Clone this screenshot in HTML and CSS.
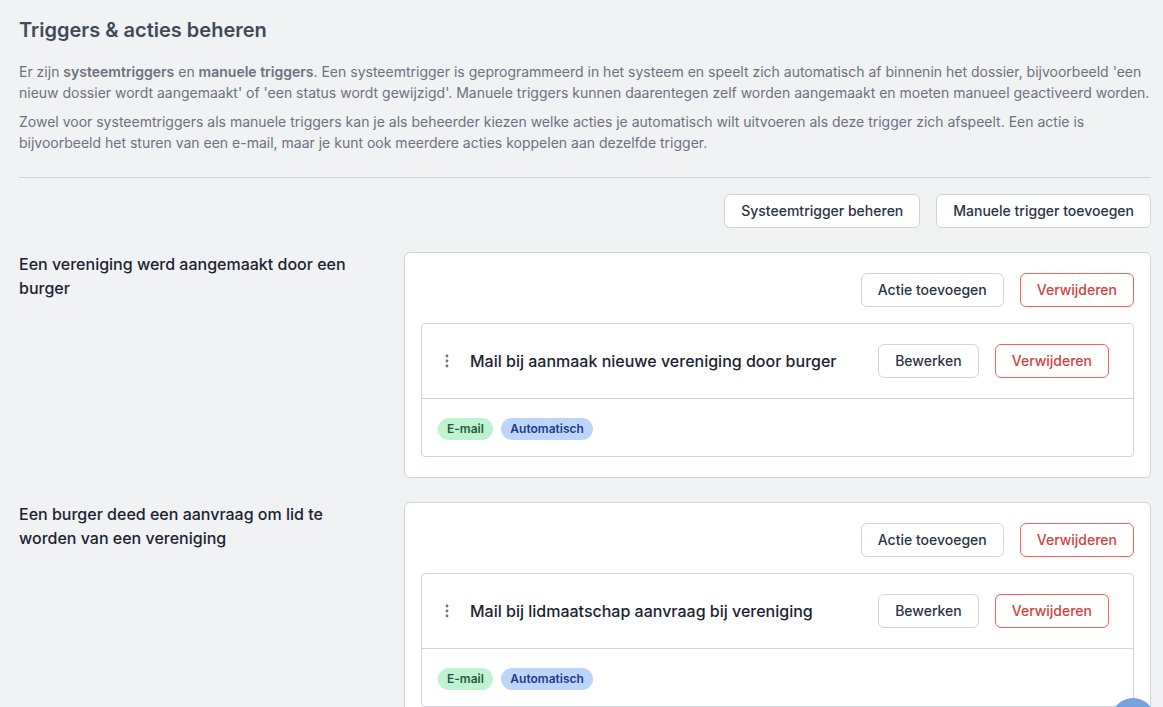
FILE: index.html
```html
<!DOCTYPE html>
<html lang="nl">
<head>
<meta charset="utf-8">
<title>Triggers &amp; acties beheren</title>
<link rel="stylesheet" href="styles.css">
</head>
<body>
<main class="page">
  <h1 class="title">Triggers &amp; acties beheren</h1>
  <div class="intro">
    <p>Er zijn <strong>systeemtriggers</strong> en <strong>manuele triggers</strong>. Een systeemtrigger is geprogrammeerd in het systeem en speelt zich automatisch af binnenin het dossier, bijvoorbeeld 'een nieuw dossier wordt aangemaakt' of 'een status wordt gewijzigd'. Manuele triggers kunnen daarentegen zelf worden aangemaakt en moeten manueel geactiveerd worden.</p>
    <p>Zowel voor systeemtriggers als manuele triggers kan je als beheerder kiezen welke acties je automatisch wilt uitvoeren als deze trigger zich afspeelt. Een actie is bijvoorbeeld het sturen van een e-mail, maar je kunt ook meerdere acties koppelen aan dezelfde trigger.</p>
  </div>
  <hr class="divider">
  <div class="actions">
    <button class="btn">Systeemtrigger beheren</button>
    <button class="btn">Manuele trigger toevoegen</button>
  </div>

  <section class="trigger">
    <h2 class="trigger-name">Een vereniging werd aangemaakt door een burger</h2>
    <div class="card">
      <div class="actions">
        <button class="btn">Actie toevoegen</button>
        <button class="btn btn-danger">Verwijderen</button>
      </div>
      <div class="action-card">
        <div class="action-head">
          <svg class="dots" width="4" height="14" viewBox="0 0 4 14"><circle cx="2" cy="2" r="1.4"/><circle cx="2" cy="7" r="1.4"/><circle cx="2" cy="12" r="1.4"/></svg>
          <span class="action-name">Mail bij aanmaak nieuwe vereniging door burger</span>
          <button class="btn">Bewerken</button>
          <button class="btn btn-danger">Verwijderen</button>
        </div>
        <div class="action-tags">
          <span class="tag tag-green">E-mail</span>
          <span class="tag tag-blue">Automatisch</span>
        </div>
      </div>
    </div>
  </section>

  <section class="trigger">
    <h2 class="trigger-name">Een burger deed een aanvraag om lid te worden van een vereniging</h2>
    <div class="card">
      <div class="actions">
        <button class="btn">Actie toevoegen</button>
        <button class="btn btn-danger">Verwijderen</button>
      </div>
      <div class="action-card">
        <div class="action-head">
          <svg class="dots" width="4" height="14" viewBox="0 0 4 14"><circle cx="2" cy="2" r="1.4"/><circle cx="2" cy="7" r="1.4"/><circle cx="2" cy="12" r="1.4"/></svg>
          <span class="action-name">Mail bij lidmaatschap aanvraag bij vereniging</span>
          <button class="btn">Bewerken</button>
          <button class="btn btn-danger">Verwijderen</button>
        </div>
        <div class="action-tags">
          <span class="tag tag-green">E-mail</span>
          <span class="tag tag-blue">Automatisch</span>
        </div>
      </div>
    </div>
  </section>
</main>
<div class="help"><span class="help-inner"></span></div>
</body>
</html>
```

FILE: styles.css
```css
* { box-sizing: border-box; }
html, body { height: 100%; }
body {
  margin: 0;
  overflow: hidden;
  background: #f1f2f4;
  font-family: Inter, "Liberation Sans", sans-serif;
  color: #111827;
}
.page { padding: 16px 12px 0 19px; }
.title {
  margin: 0;
  font-size: 20px;
  line-height: 28px;
  font-weight: 600;
  color: #414a58;
}
.intro { margin-top: 17px; font-size: 14px; line-height: 21px; color: #6b7280; }
.intro p { margin: 0 0 8px; }
.intro p:last-child { margin-bottom: 0; }
.intro strong { font-weight: 600; }
.divider {
  margin: 24px 0 16px;
  border: 0;
  border-top: 1px solid #d1d5db;
}
.actions { display: flex; justify-content: flex-end; gap: 16px; }
.btn {
  height: 34px;
  padding: 0 16px;
  background: #fff;
  border: 1px solid #d1d5db;
  border-radius: 6px;
  font: 450 14px/20px Inter, "Liberation Sans", sans-serif;
  color: #2b3442;
  white-space: nowrap;
}
.btn-danger { border-color: #ef6459; color: #d3433a; }
.page > .actions { margin-bottom: 24px; }
.trigger {
  display: grid;
  grid-template-columns: 361px 1fr;
  gap: 24px;
  margin-bottom: 24px;
}
.trigger-name {
  margin: 0;
  font-size: 16px;
  line-height: 24px;
  font-weight: 450;
  color: #1b2331;
}
.card {
  background: #fff;
  border: 1px solid #d1d5db;
  border-radius: 6px;
  padding: 20px 16px;
}
.action-card {
  margin-top: 16px;
  border: 1px solid #d1d5db;
  border-radius: 4px;
}
.action-head {
  display: flex;
  align-items: center;
  gap: 16px;
  padding: 20px 24px 20px 23px;
  border-bottom: 1px solid #d1d5db;
}
.dots { fill: #6b7280; flex: none; margin-right: 4px; }
.action-name {
  flex: 1;
  margin-left: 1px;
  font-size: 16px;
  line-height: 24px;
  font-weight: 450;
  color: #1b2331;
}
.action-tags { display: flex; gap: 8px; padding: 19px 16px 16px; }
.tag {
  height: 22px;
  padding: 0 9px;
  border-radius: 11px;
  font-size: 12px;
  line-height: 22px;
  font-weight: 600;
}
.tag-green { background: #bff2d0; color: #245a3c; }
.tag-blue { background: #bcd6fb; color: #1e3a8a; padding: 0 9.5px; }
.help {
  position: fixed;
  left: 1111px;
  top: 698px;
  width: 44px;
  height: 44px;
  border-radius: 50%;
  background: #76a3dd;
  display: flex;
  align-items: center;
  justify-content: center;
}
.help-inner {
  width: 26px;
  height: 26px;
  border-radius: 50%;
  background: #fff;
}
```
